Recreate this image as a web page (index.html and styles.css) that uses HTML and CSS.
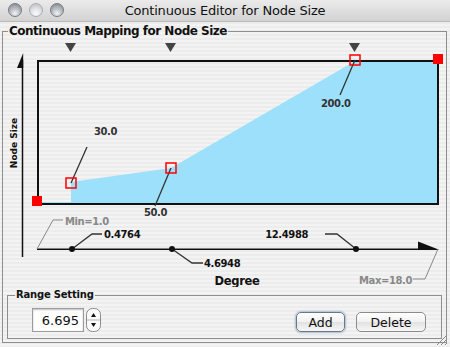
FILE: index.html
```html
<!DOCTYPE html>
<html lang="en">
<head>
  <meta charset="UTF-8" />
  <title>Continuous Editor for Node Size</title>
  <link rel="stylesheet" href="styles.css">
</head>
<body>
  <div class="window">
    <div class="titlebar">
      <div class="lights">
        <span class="light"></span>
        <span class="light dim"></span>
        <span class="light"></span>
      </div>
      <div class="title">Continuous Editor for Node Size</div>
    </div>

    <div class="content">
      <fieldset class="group mapping">
        <legend>Continuous Mapping for Node Size</legend>

        <svg class="chart" width="443" height="248" viewBox="3 39 443 248">
          <!-- slider handles -->
          <g fill="#444">
            <polygon points="65,43 76,43 70.5,52" />
            <polygon points="165,43 176,43 170.5,52" />
            <polygon points="349,43 360,43 354.5,52" />
          </g>

          <!-- y axis -->
          <line x1="22.5" y1="60" x2="22.5" y2="257" stroke="#111" stroke-width="1.5" />
          <polygon points="23.2,53 23.2,68 17,68" fill="#111" />
          <text class="axis-name small" transform="translate(17,143) rotate(-90)" text-anchor="middle">Node Size</text>

          <!-- mapping area -->
          <polygon points="38,204 38,202 71,202 71,182 171,168 355,61 438,61 438,204" fill="#9de0fc" />
          <rect x="38" y="61" width="400" height="143" fill="none" stroke="#111" stroke-width="2" />

          <rect x="32" y="196" width="10" height="10" fill="#f00" />
          <rect x="433" y="54" width="10" height="10" fill="#f00" />

          <g stroke="#333" stroke-width="1.3" fill="none">
            <line x1="71" y1="183" x2="87" y2="147" />
            <line x1="171" y1="168" x2="155" y2="206" />
            <line x1="355" y1="60" x2="340" y2="95" />
          </g>
          <g fill="none" stroke="#f00" stroke-width="1.5">
            <rect x="66" y="178" width="10" height="10" />
            <rect x="166" y="163" width="10" height="10" />
            <rect x="350" y="55" width="10" height="10" />
          </g>

          <g class="val">
            <text x="94" y="135">30.0</text>
            <text x="144" y="216">50.0</text>
            <text x="321" y="107">200.0</text>
          </g>

          <!-- x axis -->
          <line x1="37" y1="249.3" x2="430" y2="249.3" stroke="#111" stroke-width="1.6" />
          <polygon points="418,241.5 438.5,249.5 438.5,250 418,250" fill="#111" />

          <g stroke="#888" stroke-width="1" fill="none">
            <polyline points="37,249 53,220 63,220" />
            <polyline points="438,249 425,279 413,279" />
          </g>
          <text class="range-label" x="65" y="224.5">Min=1.0</text>
          <text class="range-label" x="412" y="283.5" text-anchor="end">Max=18.0</text>

          <g stroke="#333" stroke-width="1.3" fill="none">
            <polyline points="72,249 92,234 102,234" />
            <polyline points="172,249 192,263 203,263" />
            <polyline points="356,249 337,234 325,234" />
          </g>
          <g fill="#111">
            <circle cx="72" cy="249" r="3" />
            <circle cx="172" cy="249" r="3" />
            <circle cx="356" cy="249" r="3" />
          </g>
          <g class="pt">
            <text x="104" y="238">0.4764</text>
            <text x="204" y="267">4.6948</text>
            <text x="308" y="238" text-anchor="end">12.4988</text>
          </g>

          <text class="axis-name big" x="237" y="285" text-anchor="middle">Degree</text>
        </svg>

        <fieldset class="group range">
          <legend>Range Setting</legend>
          <div class="range-row">
            <input class="spin-field" type="text" value="6.695">
            <svg class="stepper" width="15" height="24" viewBox="0 0 15 24">
              <rect x="0.5" y="0.5" width="14" height="23" rx="6" fill="#fafafa" stroke="#8a8a8a" />
              <line x1="1" y1="12" x2="14" y2="12" stroke="#b5b5b5" />
              <polygon points="7.5,5 10,9 5,9" fill="#111" />
              <polygon points="5,15 10,15 7.5,19" fill="#111" />
            </svg>
            <div class="buttons">
              <button class="btn default">Add</button>
              <button class="btn">Delete</button>
            </div>
          </div>
        </fieldset>
      </fieldset>
    </div>

    <svg class="grip" width="14" height="14" viewBox="0 0 14 14">
      <g stroke="#8a8a8a" stroke-width="1">
        <line x1="13" y1="3" x2="3" y2="13" />
        <line x1="13" y1="7" x2="7" y2="13" />
        <line x1="13" y1="11" x2="11" y2="13" />
      </g>
    </svg>
  </div>
</body>
</html>
```

FILE: styles.css
```css
body {
  margin: 0;
  font-family: "DejaVu Sans", Verdana, sans-serif;
  background: #fff;
}
.window {
  position: relative;
  width: 450px;
  height: 347px;
  overflow: hidden;
}
.titlebar {
  height: 22px;
  display: grid;
  grid-template-columns: 1fr auto 1fr;
  background: linear-gradient(#ebebeb, #d2d2d2);
  box-sizing: border-box;
  border-bottom: 1px solid #b9b9b9;
}
.lights {
  display: flex;
  gap: 7px;
  padding: 3px 0 0 8px;
}
.light {
  width: 14px;
  height: 14px;
  box-sizing: border-box;
  border-radius: 50%;
  border: 1px solid #767b82;
  background: radial-gradient(circle at 50% 78%, #f2f4f6 0, #b9bdc3 45%, #7a8088 100%);
}
.light.dim {
  border-color: #a9adb2;
  background: radial-gradient(circle at 50% 78%, #fbfbfb 0, #dcdee1 50%, #b4b8bd 100%);
}
.title {
  font-size: 13px;
  letter-spacing: -0.2px;
  line-height: 22px;
  color: #111;
}
.content {
  height: 325px;
  padding-top: 1px;
  box-sizing: border-box;
  background: repeating-linear-gradient(#ececec 0, #ececec 2px, #f3f3f3 2px, #f3f3f3 4px);
}
.group {
  margin: 0;
  padding: 0;
  box-sizing: border-box;
  border: 1px solid #8e8e8e;
}
.group legend {
  font-weight: bold;
  font-size: 12px;
  letter-spacing: -0.5px;
  line-height: 16px;
  padding: 0 1px;
  color: #111;
}
.mapping {
  margin-left: 2px;
  width: 445px;
  height: 320px;
}
.mapping > legend {
  margin-left: 5px;
}
.chart {
  display: block;
}
.chart text {
  font-family: "DejaVu Sans", Verdana, sans-serif;
  font-weight: bold;
}
.chart .val text {
  font-size: 10px;
  letter-spacing: -0.4px;
  fill: #333;
}
.chart .pt text {
  font-size: 10px;
  letter-spacing: -0.4px;
  fill: #111;
}
.chart .range-label {
  font-size: 10px;
  letter-spacing: -0.4px;
  fill: #888;
}
.axis-name.small {
  font-size: 9px;
  fill: #111;
}
.axis-name.big {
  font-size: 11.5px;
  letter-spacing: -0.3px;
  fill: #111;
}
.range {
  margin-left: 4px;
  width: 435px;
  height: 52px;
}
.range > legend {
  margin-left: 7px;
  font-size: 10px;
  letter-spacing: -0.2px;
}
.range-row {
  display: flex;
  align-items: flex-start;
  padding: 5px 15px 0 24px;
}
.spin-field {
  width: 52px;
  height: 24px;
  box-sizing: border-box;
  border: 1px solid #9c9c9c;
  box-shadow: inset 0 1px 2px rgba(0, 0, 0, 0.25);
  padding: 0 4px;
  font-family: "DejaVu Sans", Verdana, sans-serif;
  font-size: 13px;
  text-align: right;
  color: #111;
}
.stepper {
  margin-left: 2px;
}
.buttons {
  display: flex;
  gap: 11px;
  margin-left: auto;
  margin-top: 4px;
}
.btn {
  height: 20px;
  padding: 0;
  font-family: "DejaVu Sans", Verdana, sans-serif;
  font-size: 12.5px;
  color: #111;
  border: 1px solid #8c8c8c;
  border-radius: 5px;
  background: linear-gradient(#ffffff, #f1f1f1 50%, #e2e2e2 52%, #f7f7f7);
  width: 70px;
}
.btn.default {
  width: 49px;
  border-color: #6d7784;
  box-shadow: 0 0 2px 1px #a9bbd0;
}
.grip {
  position: absolute;
  right: 2px;
  bottom: 1px;
}
```
